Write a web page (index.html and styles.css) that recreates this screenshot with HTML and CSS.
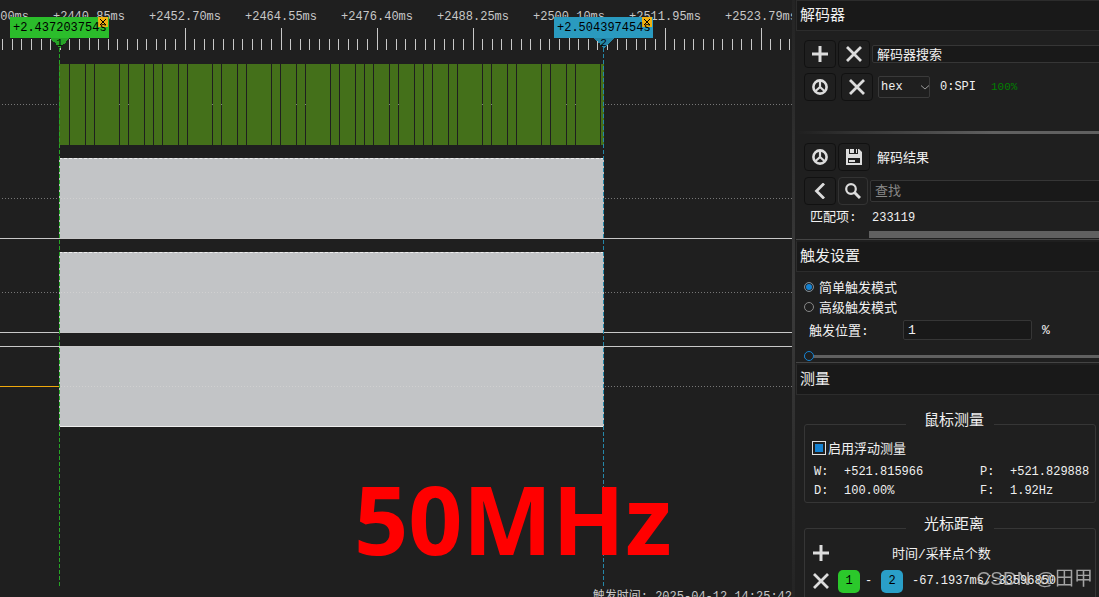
FILE: index.html
```html
<!DOCTYPE html>
<html lang="zh-CN">
    <head>
        <meta charset="utf-8">
        <title>逻辑分析仪</title>
        <link rel="stylesheet" href="styles.css">
    </head>
    <body>
        <svg class="defs" width="0" height="0">
            <symbol id="plus" viewBox="0 0 16 16"><path d="M8 0V16M0 8H16" stroke="currentColor" stroke-width="3"/></symbol>
            <symbol id="cross" viewBox="0 0 16 16"><path d="M1 1L15 15M15 1L1 15" stroke="currentColor" stroke-width="2.8"/></symbol>
            <symbol id="wheel" viewBox="0 0 16 16">
                <circle cx="8" cy="8" r="6.6" fill="none" stroke="currentColor" stroke-width="2.6"/>
                <path d="M8 1V8L3 12.5M8 8L13 12.5" fill="none" stroke="currentColor" stroke-width="2.2"/>
            </symbol>
            <symbol id="save" viewBox="0 0 16 16">
                <path d="M0 0H3V5H12V0H13L16 3V16H0Z" fill="currentColor"/>
                <path d="M4 0H8V4H4ZM10 0H11V4H10Z" fill="currentColor"/>
                <path d="M2 9H14V14H2Z" fill="#1f1f1f"/>
                <path d="M3 11H9V13H3Z" fill="currentColor"/>
            </symbol>
            <symbol id="back" viewBox="0 0 16 16"><path d="M12 0.5L4.5 8L12 15.5" fill="none" stroke="currentColor" stroke-width="2.8"/></symbol>
            <symbol id="search" viewBox="0 0 16 16">
                <circle cx="6" cy="6" r="4.8" fill="none" stroke="currentColor" stroke-width="2.2"/>
                <path d="M9.5 9.5L15 15" stroke="currentColor" stroke-width="3"/>
            </symbol>
        </svg>

        <main class="app">
            <section class="scope">
                <div class="ruler">
                    <div class="labels">
                        <span>+2429.00ms</span><span>+2440.85ms</span><span>+2452.70ms</span><span>+2464.55ms</span><span>+2476.40ms</span><span>+2488.25ms</span><span>+2500.10ms</span><span>+2511.95ms</span><span>+2523.79ms</span>
                    </div>
                    <svg class="ticks" width="100%" height="22" shape-rendering="crispEdges">
                        <defs>
                            <pattern id="tick" x="-7" width="96" height="22" patternUnits="userSpaceOnUse">
                                <path d="M0.5 0V22M9.5 11V22M19.5 11V22M28.5 11V22M38.5 11V22M48.5 11V22M57.5 11V22M67.5 11V22M76.5 11V22M86.5 11V22" stroke="#c8c8c8"/>
                            </pattern>
                        </defs>
                        <rect width="100%" height="22" fill="url(#tick)"/>
                    </svg>
                </div>

                <div class="channel">
                    <svg class="wave" width="545" height="81" viewBox="59 64 545 81" shape-rendering="crispEdges">
                        <rect x="59" y="64" width="545" height="81" fill="#44701a"/>
                        <path d="M69.5 64v81M85.5 64v81M94.5 64v81M119.5 64v81M128.5 64v81M144.5 64v81M153.5 64v81M162.5 64v81M178.5 64v81M187.5 64v81M212.5 64v81M221.5 64v81M237.5 64v81M246.5 64v81M271.5 64v81M280.5 64v81M296.5 64v81M305.5 64v81M330.5 64v81M339.5 64v81M355.5 64v81M364.5 64v81M373.5 64v81M389.5 64v81M398.5 64v81M414.5 64v81M423.5 64v81M432.5 64v81M448.5 64v81M457.5 64v81M482.5 64v81M491.5 64v81M507.5 64v81M516.5 64v81M541.5 64v81M550.5 64v81M566.5 64v81M575.5 64v81M600.5 64v81" stroke="#1f1f1f"/>
                        <path d="M119 104.5h1M128 104.5h1M212 104.5h1M221 104.5h1M296 104.5h1M305 104.5h1M389 104.5h1M398 104.5h1M482 104.5h1M491 104.5h1M566 104.5h1M575 104.5h1" stroke="#808080"/>
                    </svg>
                </div>
                <div class="channel low"><div class="wave busy"></div></div>
                <div class="channel low"><div class="wave busy"></div></div>
                <div class="channel high trigger"><div class="wave busy"></div></div>

                <div class="cursor first">
                    <span class="time">+2.437203754s</span>
                    <button class="close" aria-label="close"><svg width="6" height="6" viewBox="0 0 6 6"><path d="M0 0L6 6M6 0L0 6" stroke="#000"/></svg></button>
                    <span class="mark">1</span>
                </div>
                <div class="cursor second">
                    <span class="time">+2.504397454s</span>
                    <button class="close" aria-label="close"><svg width="6" height="6" viewBox="0 0 6 6"><path d="M0 0L6 6M6 0L0 6" stroke="#000"/></svg></button>
                    <span class="mark">2</span>
                </div>
                <div class="note">50MHz</div>
                <div class="trigger-time">触发时间: 2025-04-12 14:25:42</div>
            </section>

            <div class="splitter"></div>

            <aside class="panel">
                <h2>解码器</h2>
                <div class="tools">
                    <button class="tool" aria-label="添加"><svg><use href="#plus"/></svg></button>
                    <button class="tool" aria-label="删除"><svg><use href="#cross"/></svg></button>
                    <input class="field decoder-search" type="text" aria-label="解码器搜索" value="解码器搜索">
                </div>
                <div class="tools decoder">
                    <button class="tool" aria-label="设置"><svg><use href="#wheel"/></svg></button>
                    <button class="tool" aria-label="移除"><svg><use href="#cross"/></svg></button>
                    <div class="format">
                        <select aria-label="格式"><option>hex</option></select>
                        <svg width="8" height="5" viewBox="0 0 8 5"><path d="M0 0.5L4 4L8 0.5" fill="none" stroke="#999"/></svg>
                    </div>
                    <span class="protocol">0:SPI</span>
                    <span class="percent">100%</span>
                </div>
                <div class="divider"></div>
                <div class="tools">
                    <button class="tool" aria-label="设置"><svg><use href="#wheel"/></svg></button>
                    <button class="tool" aria-label="保存"><svg><use href="#save"/></svg></button>
                    <span class="result">解码结果</span>
                </div>
                <div class="tools find">
                    <button class="tool" aria-label="上一个"><svg><use href="#back"/></svg></button>
                    <button class="tool light" aria-label="搜索"><svg><use href="#search"/></svg></button>
                    <input class="field" type="text" aria-label="查找" placeholder="查找">
                </div>
                <div class="matches"><span>匹配项:</span><span>233119</span></div>
                <div class="scrollbar"></div>

                <h2 class="split">触发设置</h2>
                <div class="modes">
                    <label><input type="radio" name="mode" checked><span>简单触发模式</span></label>
                    <label><input type="radio" name="mode"><span>高级触发模式</span></label>
                </div>
                <div class="position">
                    <label for="pos">触发位置:</label>
                    <input class="field" id="pos" type="text" value="1">
                    <span>%</span>
                </div>
                <input class="slider" type="range" aria-label="触发位置" min="0" max="100" value="0">

                <h2 class="split">测量</h2>
                <fieldset class="mouse">
                    <legend>鼠标测量</legend>
                    <label class="float"><input type="checkbox" checked><span>启用浮动测量</span></label>
                    <dl>
                        <dt>W:</dt><dd>+521.815966</dd><dt>P:</dt><dd>+521.829888</dd>
                        <dt>D:</dt><dd>100.00%</dd><dt>F:</dt><dd>1.92Hz</dd>
                    </dl>
                </fieldset>
                <fieldset class="distance">
                    <legend>光标距离</legend>
                    <div class="dist-head">
                        <button class="plain" aria-label="添加"><svg><use href="#plus"/></svg></button>
                        <span>时间/采样点个数</span>
                    </div>
                    <div class="dist-row">
                        <button class="plain" aria-label="删除"><svg><use href="#cross"/></svg></button>
                        <button class="badge green">1</button>
                        <span class="dash">-</span>
                        <button class="badge blue">2</button>
                        <span>-67.1937ms/-33596850</span>
                    </div>
                </fieldset>
            </aside>
        </main>
        <div class="watermark">CSDN @田甲</div>
    </body>
</html>
```

FILE: styles.css
```css
* {
    box-sizing: border-box;
}
body {
    margin: 0;
    background-color: #1f1f1f;
    color: #f0f0f0;
    font-family: "Liberation Mono", "Noto Sans CJK SC", monospace;
    font-size: 12px;
    overflow: hidden;
}
button, input, select {
    font: inherit;
    color: inherit;
    margin: 0;
}
button {
    padding: 0;
    border: none;
    background: none;
}
.defs {
    position: absolute;
}
.app {
    display: flex;
    height: 100vh;
    overflow: hidden;
}

/* waveforms */
.scope {
    position: relative;
    flex: 1;
    min-width: 0;
    overflow: hidden;
}
.ruler {
    height: 64px;
    padding-top: 8px;
    color: #c8c8c8;
}
.labels {
    display: flex;
    height: 20px;
    line-height: 19px;
    margin-left: -55px;
}
.labels span {
    flex: 0 0 96px;
    text-align: center;
}
.ticks {
    display: block;
}
.channel {
    position: relative;
    height: 81px;
    margin-bottom: 13px;
    background: repeating-linear-gradient(to right, transparent 0 2px, #777 2px 3px) 0 40px / 100% 1px no-repeat;
}
.channel.low {
    border-bottom: 1px solid #c8c8c8;
}
.channel.high {
    border-top: 1px solid #c8c8c8;
    background-position: 0 39px;
}
.wave {
    display: block;
    margin-left: 59px;
}
.busy {
    width: 545px;
    height: 80px;
    border-top: 1px dashed #eee;
    background: repeating-linear-gradient(to right, transparent 0 2px, #d0d0d0 2px 3px) 0 39px / 100% 1px no-repeat #c2c4c6;
}
.high .busy {
    border-top: none;
    border-bottom: 1px solid #eee;
}
.trigger::before {
    content: "";
    position: absolute;
    top: 39px;
    left: 0;
    width: 59px;
    height: 1px;
    background-color: #f0a80c;
}
.cursor {
    position: absolute;
    top: 17px;
    width: 99px;
    height: 569px;
    background: linear-gradient(var(--flag), var(--flag)) 0 0 / 100% 21px no-repeat;
    color: #000;
}
.first {
    left: 10px;
    --flag: #2bbd2b;
    --tip: #27a427;
}
.second {
    left: 554px;
    --flag: #2a9abf;
    --tip: #2587a8;
}
.cursor::after {
    content: "";
    position: absolute;
    top: 31px;
    bottom: 0;
    left: 49px;
    width: 1px;
    background: repeating-linear-gradient(to bottom, var(--tip) 0 4px, transparent 4px 6px);
}
.time {
    position: relative;
    z-index: 1;
    display: block;
    height: 21px;
    line-height: 23px;
    padding-left: 3px;
    white-space: nowrap;
    pointer-events: none;
}
.close {
    position: absolute;
    top: 0;
    right: 1px;
    display: flex;
    align-items: center;
    justify-content: center;
    width: 10px;
    height: 10px;
    background-color: #f0b010;
}
.mark {
    display: block;
    width: 20px;
    height: 10px;
    margin: 0 auto;
    line-height: 10px;
    font-size: 11px;
    text-align: center;
    background: conic-gradient(from -45deg at 50% 100%, var(--tip) 90deg, transparent 0);
}
.note {
    position: absolute;
    left: 354px;
    top: 463px;
    color: #f00;
    font: bold 95px/110px "Noto Sans", sans-serif;
}
.trigger-time {
    position: absolute;
    right: 0;
    bottom: -10px;
    line-height: 20px;
    color: #c8c8c8;
    white-space: nowrap;
}
.splitter {
    width: 3px;
    margin-right: 1px;
    background: linear-gradient(#242424, #3a3a3a 50%, #242424);
}

/* side panel */
.panel {
    flex: 0 0 303px;
    overflow: hidden;
}
h2 {
    height: 31px;
    margin: 0;
    padding-left: 3px;
    border: 1px solid #2c2c2c;
    border-right: none;
    background-color: #191919;
    font-size: 15px;
    font-weight: normal;
    line-height: 32px;
}
.split {
    height: 32px;
    border-top: 2px solid #1f1f1f;
    box-shadow: 0 -1px #444;
}
.tools {
    display: flex;
    align-items: center;
    height: 28px;
    margin-top: 6px;
    padding-left: 8px;
    gap: 2px;
}
h2 + .tools {
    margin-top: 9px;
}
.tool {
    display: flex;
    align-items: center;
    justify-content: center;
    flex: 0 0 32px;
    height: 28px;
    border: 1px solid #111;
    border-radius: 4px;
}
.tool.light {
    flex-basis: 30px;
    border-color: #333;
}
.tool svg, .plain svg {
    display: block;
    width: 16px;
    height: 16px;
    color: #dcdcdc;
}
.field {
    min-width: 0;
    height: 22px;
    padding: 0 4px;
    border: 1px solid #363636;
    border-radius: 2px;
    background-color: #191919;
    font-size: 13px;
}
.tools .field {
    flex: 1;
    margin-right: -4px;
}
.tools .decoder-search {
    height: 18px;
    padding: 0 4px 2px;
}
.field::placeholder {
    color: #888;
}
.decoder {
    margin-top: 5px;
    gap: 5px;
}
.format {
    position: relative;
    width: 52px;
    height: 22px;
}
.format select {
    appearance: none;
    width: 100%;
    height: 22px;
    padding: 0 2px;
    border: 1px solid #3a3a3a;
    border-radius: 2px;
    background-color: #1f1f1f;
}
.format svg {
    position: absolute;
    right: 1px;
    top: 9px;
    pointer-events: none;
}
.protocol {
    margin: 0 10px 0 5px;
}
.percent {
    color: #008000;
    font-size: 11px;
}
.divider {
    height: 3px;
    margin: 30px 0 9px;
    background: linear-gradient(to right, #1f1f1f, #606060 65%);
}
.result {
    margin-left: 5px;
    padding-bottom: 2px;
    font-size: 13px;
}
.matches {
    display: flex;
    height: 26px;
    line-height: 26px;
    padding-left: 14px;
}
.matches span:first-child {
    width: 62px;
    font-size: 13px;
}
.scrollbar {
    height: 7px;
    margin: 0 0 2px 73px;
    background-color: #606060;
}
.modes {
    padding: 5px 0 0 8px;
}
.modes label {
    display: flex;
    align-items: center;
    height: 20px;
    gap: 5px;
    font-size: 13px;
}
.modes span, .float span {
    padding-bottom: 2px;
}
.modes input {
    appearance: none;
    width: 10px;
    height: 10px;
    border: 1px solid #888;
    border-radius: 50%;
}
.modes input:checked {
    background-color: #1482d2;
    box-shadow: inset 0 0 0 1px #1f1f1f;
}
.position {
    display: flex;
    align-items: center;
    height: 26px;
    padding-left: 13px;
    font-size: 13px;
}
.position label {
    width: 94px;
    padding-bottom: 2px;
}
.position .field {
    width: 129px;
    height: 20px;
    margin-right: 10px;
}
.slider {
    appearance: none;
    display: block;
    width: 295px;
    height: 12px;
    margin: 7px 0 1px 8px;
    background: linear-gradient(#606060, #606060) 0 5px / 100% 3px no-repeat;
}
.slider::-webkit-slider-thumb {
    appearance: none;
    width: 10px;
    height: 10px;
    border: 1px solid #1482d2;
    border-radius: 50%;
    background-color: #1f1f1f;
}
fieldset {
    min-width: 0;
    margin: 16px 3px 0 8px;
    padding: 1px 8px 2px;
    border: 1px solid #363636;
    border-radius: 3px;
}
legend {
    margin: 0 auto;
    padding: 0 10px 4px 18px;
    font-size: 15px;
    line-height: 22px;
}
.float {
    display: flex;
    align-items: center;
    height: 20px;
    gap: 2px;
    margin-left: -1px;
    font-size: 13px;
}
.float input {
    appearance: none;
    width: 14px;
    height: 14px;
    border: 1px solid #e0e0e0;
    background-color: #1482d2;
    box-shadow: inset 0 0 0 2px #1f1f1f;
}
dl {
    display: grid;
    grid-template-columns: 30px 136px 30px 1fr;
    grid-auto-rows: 19px;
    margin: 4px 0 0 1px;
    line-height: 20px;
}
dd {
    margin: 0;
}
.distance {
    margin-top: 12px;
    height: 120px;
}
.dist-head, .dist-row {
    display: flex;
    align-items: center;
    height: 22px;
    white-space: nowrap;
}
.dist-head span {
    margin-left: 63px;
    padding-bottom: 2px;
    font-size: 13px;
}
.dist-row {
    margin-top: 6px;
}
.badge {
    flex: 0 0 22px;
    height: 23px;
    border-radius: 5px;
    color: #000;
}
.green {
    margin-left: 9px;
    background-color: #2bc82b;
}
.blue {
    margin-right: 9px;
    background-color: #2a9fc8;
}
.dash {
    width: 21px;
    padding-left: 5px;
}
.watermark {
    position: fixed;
    right: 6px;
    bottom: 5px;
    color: rgba(220, 220, 220, 0.7);
    font: 19px/26px "Liberation Sans", "Noto Sans CJK SC", sans-serif;
}
```
